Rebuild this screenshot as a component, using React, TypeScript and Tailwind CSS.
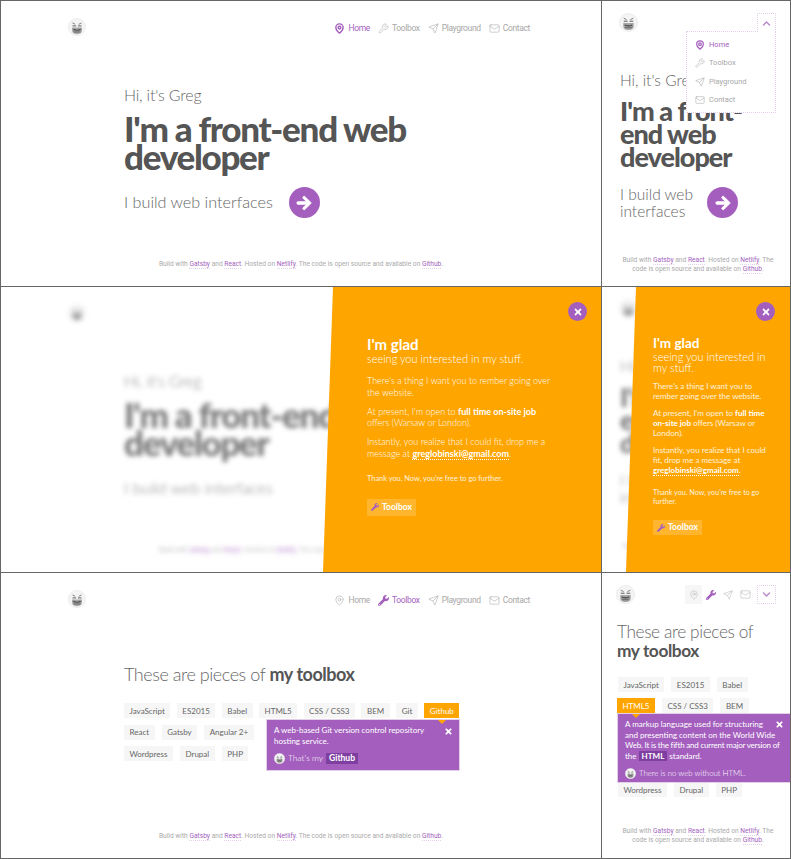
import { ReactNode } from 'react'
import { FaArrowRight, FaTimes, FaChevronUp, FaChevronDown, FaWrench } from 'react-icons/fa'
import { MapPin, Wrench, Send, Mail } from 'lucide-react'

const PURPLE = 'text-[#a45fbe]'
const DISPLAY = "font-['Lato',sans-serif]"
const BODY = "font-['Roboto',sans-serif]"

const NAV = [
  { label: 'Home', Icon: MapPin },
  { label: 'Toolbox', Icon: Wrench },
  { label: 'Playground', Icon: Send },
  { label: 'Contact', Icon: Mail },
]

function Avatar({ className }: { className: string }) {
  return (
    <svg viewBox="0 0 20 20" className={className}>
      <circle cx="10" cy="10" r="9.6" fill="#f4f4f4" stroke="#e0e0e0" strokeWidth="0.5" />
      <path d="M5 5.500l3 1.500M15 5.500l-3 1.500" stroke="#777" strokeWidth="1" />
      <rect x="5" y="8" width="4" height="1.500" fill="#888" />
      <rect x="11" y="8" width="4" height="1.500" fill="#888" />
      <path d="M4.500 10.500h11v3.500c0 2.500-2.500 4-5.500 4s-5.500-1.500-5.500-4z" fill="#a5a5a5" />
      <path d="M6 12.500c2 1.500 6 1.500 8 0" stroke="#444" strokeWidth="1.200" fill="none" />
      <path d="M6 15.500h8" stroke="#666" strokeWidth="1" />
    </svg>
  )
}

function A({ children }: { children: ReactNode }) {
  return <span className={`${PURPLE} border-b border-dotted border-[#e3cfea]`}>{children}</span>
}

function Footer({ className }: { className: string }) {
  return (
    <p className={`${BODY} text-center text-[6.650px] leading-[8.500px] text-[#aaaaaa] ${className}`}>
      Build with <A>Gatsby</A> and <A>React</A>. Hosted on <A>Netlify</A>. The code is open source and available on <A>Github</A>.
    </p>
  )
}

function NavIcon({ label, active, size }: { label: string; active: boolean; size: string }) {
  if (label === 'Toolbox' && active) return <FaWrench className={size} />
  const Icon = NAV.find((n) => n.label === label)!.Icon
  return <Icon className={size} strokeWidth={active ? 3 : 1.25} />
}

function DesktopHeader({ active }: { active: string }) {
  return (
    <header className="flex items-center justify-between pl-[67px] pr-[71px] pt-[17px]">
      <Avatar className="w-[18px] h-[18px]" />
      <nav className={`${BODY} mt-[3px] flex items-center gap-2 text-[8.500px] tracking-[-0.35px] text-[#a8a8a8]`}>
        {NAV.map(({ label }) => (
          <span key={label} className={`flex items-center gap-[3px] ${label === active ? PURPLE : ''}`}>
            <NavIcon label={label} active={label === active} size="w-[11px] h-[11px]" />
            {label}
          </span>
        ))}
      </nav>
    </header>
  )
}

function ArrowButton() {
  return (
    <span className="flex items-center justify-center w-[31px] h-[31px] rounded-full bg-[#a45fbe] shrink-0">
      <FaArrowRight className="w-[16px] h-[16px] text-white" stroke="white" strokeWidth={30} />
    </span>
  )
}

function Hero({ plain }: { plain?: boolean }) {
  return (
    <div className={`${DISPLAY} text-[#666666] h-full flex flex-col`}>
      <DesktopHeader active="Home" />
      <div className="pl-[123px] pt-[49px]">
        <p className="text-[16px] leading-[20px] font-light tracking-[-0.2px]">Hi, it's Greg</p>
        <h1 className="mt-[9px] text-[35px] leading-[28px] font-black tracking-[-1.300px] text-[#555555] w-[320px]">
          I'm a front-end web developer
        </h1>
        <div className="mt-[17px] flex items-center gap-[16px] h-[31px]">
          <p className="text-[16.200px] font-light">I build web interfaces</p>
          {!plain && <ArrowButton />}
        </div>
      </div>
      <Footer className="mt-auto pb-[18px]" />
    </div>
  )
}

function HeroMobile() {
  return (
    <div className={`${DISPLAY} text-[#666666] h-full flex flex-col`}>
      <header className="flex justify-between pl-[17px] pr-[14px] pt-[12px]">
        <Avatar className="w-[19px] h-[19px]" />
        <div className="relative">
          <span className="flex items-center justify-center w-[19px] h-[19px] border border-dotted border-[#e3cfea] border-b-0 bg-white relative z-20">
            <FaChevronUp className="w-[9px] h-[9px] text-[#b98ccb]" />
          </span>
          <div className={`${BODY} absolute z-10 right-0 top-[18px] w-[90px] h-[82px] bg-white border border-dotted border-[#e3cfea] pl-[8px] pt-[8px] flex flex-col gap-[8.300px] text-[7.500px] leading-[10px] text-[#a8a8a8]`}>
            {NAV.map(({ label }) => (
              <span key={label} className={`flex items-center gap-[4px] ${label === 'Home' ? PURPLE : ''}`}>
                <NavIcon label={label} active={label === 'Home'} size="w-[10px] h-[10px]" />
                {label}
              </span>
            ))}
          </div>
        </div>
      </header>
      <div className="pl-[18px] pt-[39px]">
        <p className="text-[15.500px] leading-[18px] font-light">Hi, it's Greg</p>
        <h1 className="mt-[10px] text-[27px] leading-[23px] font-black tracking-[-1px] text-[#555555] w-[135px]">
          I'm a front-end web developer
        </h1>
        <div className="mt-[18px] flex items-center">
          <p className="text-[15.500px] leading-[16.500px] font-light w-[87px] shrink-0">I build web interfaces</p>
          <ArrowButton />
        </div>
      </div>
      <Footer className="mt-auto pb-[13px] pl-[18px] pr-[14px]" />
    </div>
  )
}

function Glad({ compact }: { compact?: boolean }) {
  return (
    <aside className={`${DISPLAY} absolute top-0 bottom-0 right-0 bg-[#ffa500] text-white [clip-path:polygon(10px_0,100%_0,100%_100%,0_100%)] ${compact ? 'w-[164px] pl-[27px] pr-[14px] pt-[48px]' : 'w-[278px] pl-[44px] pr-[46px] pt-[49px]'}`}>
      <span className={`absolute top-[15px] flex items-center justify-center w-[19px] h-[19px] rounded-full bg-[#a45fbe] ${compact ? 'right-[15px]' : 'right-[14px]'}`}>
        <FaTimes className="w-[10px] h-[10px] text-white" />
      </span>
      <h2 className={`leading-[16px] font-bold ${compact ? 'text-[13.500px]' : 'text-[15px]'}`}>I'm glad</h2>
      <p className={`font-light ${compact ? 'text-[11px] leading-[11px]' : 'text-[11px] leading-[12px] mt-px'}`}>seeing you interested in my stuff.</p>
      <div className={`flex flex-col ${compact ? 'font-normal text-white/85 text-[8px] leading-[10px] gap-[7px] mt-[8px]' : 'font-light text-[9px] leading-[11.500px] gap-[7.500px] mt-[10px]'}`}>
        <p>There's a thing I want you to rember going over the website.</p>
        <p>At present, I'm open to <b className="font-bold text-white">full time on-site job</b> offers (Warsaw or London).</p>
        <p>Instantly, you realize that I could fit, drop me a message at <b className="font-bold text-white border-b border-dotted border-white">greglobinski@gmail.com</b>.</p>
      </div>
      <p className={`font-normal text-white/85 ${compact ? 'text-[7.200px] leading-[9px] mt-[13px]' : 'text-[7.400px] leading-[9.500px] mt-[15px]'}`}>Thank you. Now, you're free to go further.</p>
      <span className={`inline-flex items-center gap-[3px] px-[4px] bg-[#ffb52e] font-bold text-[8.500px] ${compact ? 'mt-[14px] h-[15px]' : 'mt-[15px] h-[17px]'}`}>
        <FaWrench className={`w-[8px] h-[8px] ${PURPLE}`} />
        Toolbox
      </span>
    </aside>
  )
}

function Tag({ children, active }: { children: ReactNode; active?: boolean }) {
  return (
    <span className={`flex items-center h-[15px] px-[5.500px] text-[8px] ${active ? 'bg-[#ffa500] text-white' : 'bg-[#f6f6f6] text-[#666666]'}`}>
      {children}
    </span>
  )
}

function Popover({ className, arrow, children, closeClass }: { className: string; arrow: string; closeClass: string; children: ReactNode }) {
  return (
    <div className={`${DISPLAY} absolute z-10 bg-[#a45fbe] border border-[#e3cfea] text-white text-[8px] leading-[10.500px] ${className}`}>
      <span className={`absolute top-0 w-0 h-0 border-x-[4px] border-x-transparent border-t-[4px] border-t-[#ffa500] ${arrow}`} />
      <FaTimes className={`absolute w-[9px] h-[9px] ${closeClass}`} />
      {children}
    </div>
  )
}

function Chip({ children }: { children: ReactNode }) {
  return <b className="inline-block px-[3px] bg-[#7f3fa0] font-bold leading-[10.500px]">{children}</b>
}

function Toolbox() {
  return (
    <div className={`${DISPLAY} text-[#666666] h-full flex flex-col`}>
      <DesktopHeader active="Toolbox" />
      <div className="pl-[123px] pt-[53px]">
        <h1 className="text-[18px] leading-[26px] font-light tracking-[-0.45px]">
          These are pieces of <b className="font-bold text-[#555555]">my toolbox</b>
        </h1>
        <div className="relative mt-[16px] flex flex-col gap-[6.500px]">
          <div className="flex gap-[6.500px]">
            {['JavaScript', 'ES2015', 'Babel', 'HTML5', 'CSS / CSS3', 'BEM', 'Git'].map((t) => <Tag key={t}>{t}</Tag>)}
            <Tag active>Github</Tag>
          </div>
          <div className="flex gap-[7px]">
            {['React', 'Gatsby', 'Angular 2+'].map((t) => <Tag key={t}>{t}</Tag>)}
          </div>
          <div className="flex gap-[7px]">
            {['Wordpress', 'Drupal', 'PHP'].map((t) => <Tag key={t}>{t}</Tag>)}
          </div>
          <Popover className="left-[142px] top-[16px] w-[194px] h-[52px] pl-[7px] pt-[5px]" arrow="left-[171px]" closeClass="right-[6px] top-[7px]">
            <p className="w-[160px]">A web-based Git version control repository hosting service.</p>
            <p className="mt-[7px] flex items-center gap-[3px] text-[8.500px] font-light">
              <Avatar className="w-[11px] h-[11px]" /> That's my <Chip>Github</Chip>
            </p>
          </Popover>
        </div>
      </div>
      <Footer className="mt-auto pb-[18px]" />
    </div>
  )
}

function ToolboxMobile() {
  return (
    <div className={`${DISPLAY} text-[#666666] h-full flex flex-col`}>
      <header className="flex items-center justify-between pl-[14px] pr-[14px] pt-[12px]">
        <Avatar className="w-[19px] h-[19px]" />
        <div className="flex items-center text-[#b5b5b5]">
          <span className="flex items-center justify-center w-[17px] h-[19px] bg-[#f6f6f6]"><MapPin className="w-[10px] h-[10px]" strokeWidth={1.25} /></span>
          <FaWrench className={`ml-[4px] w-[10px] h-[10px] ${PURPLE}`} />
          <Send className="ml-[7px] w-[10px] h-[10px]" strokeWidth={1.25} />
          <Mail className="ml-[7px] w-[11px] h-[11px]" strokeWidth={1.25} />
          <span className="ml-[6px] flex items-center justify-center w-[19px] h-[19px] border border-dotted border-[#e3cfea]">
            <FaChevronDown className="w-[9px] h-[9px] text-[#b98ccb]" />
          </span>
        </div>
      </header>
      <div className="pl-[15px] pt-[18px]">
        <h1 className="text-[17.300px] leading-[19px] font-light tracking-[-0.4px] w-[150px]">
          These are pieces of <b className="font-bold text-[#555555]">my toolbox</b>
        </h1>
        <div className="relative mt-[17px] flex flex-col gap-[6px]">
          <div className="flex gap-[7px] pl-px">
            {['JavaScript', 'ES2015', 'Babel'].map((t) => <Tag key={t}>{t}</Tag>)}
          </div>
          <div className="flex gap-[7px]">
            <Tag active>HTML5</Tag>
            <Tag>CSS / CSS3</Tag>
            <Tag>BEM</Tag>
          </div>
          <div className="flex gap-[7px] pl-px mt-[63px]">
            {['Wordpress', 'Drupal', 'PHP'].map((t) => <Tag key={t}>{t}</Tag>)}
          </div>
          <Popover className="left-0 top-[36px] w-[175px] h-[70px] pl-[7px] pt-[5px]" arrow="left-[14px]" closeClass="right-[7px] top-[6px]">
            <p className="whitespace-nowrap">
              A markup language used for structuring<br />
              and presenting content on the World Wide<br />
              <span className="tracking-[-0.2px]">Web. It is the fifth and current major version of</span><br />
              the <Chip>HTML</Chip> standard.
            </p>
            <p className="mt-[7px] flex items-center gap-[3px] text-[7.800px] font-light">
              <Avatar className="w-[11px] h-[11px]" /> There is no web without HTML.
            </p>
          </Popover>
        </div>
      </div>
      <Footer className="mt-auto pb-[14px] pl-[18px] pr-[14px]" />
    </div>
  )
}

export default function App() {
  return (
    <div className="w-[791px] h-[859px] bg-[#666666] grid grid-cols-[600px_188px] grid-rows-[285px_285px_285px] gap-px p-px overflow-hidden">
      <section className="relative overflow-hidden bg-white"><Hero /></section>
      <section className="relative overflow-hidden bg-white"><HeroMobile /></section>
      <section className="relative overflow-hidden bg-white">
        <div className="h-full blur-[2.500px] opacity-80"><Hero plain /></div>
        <Glad />
      </section>
      <section className="relative overflow-hidden bg-white">
        <div className="h-full blur-[2.500px] opacity-80"><HeroMobile /></div>
        <Glad compact />
      </section>
      <section className="relative overflow-hidden bg-white"><Toolbox /></section>
      <section className="relative overflow-hidden bg-white"><ToolboxMobile /></section>
    </div>
  )
}
